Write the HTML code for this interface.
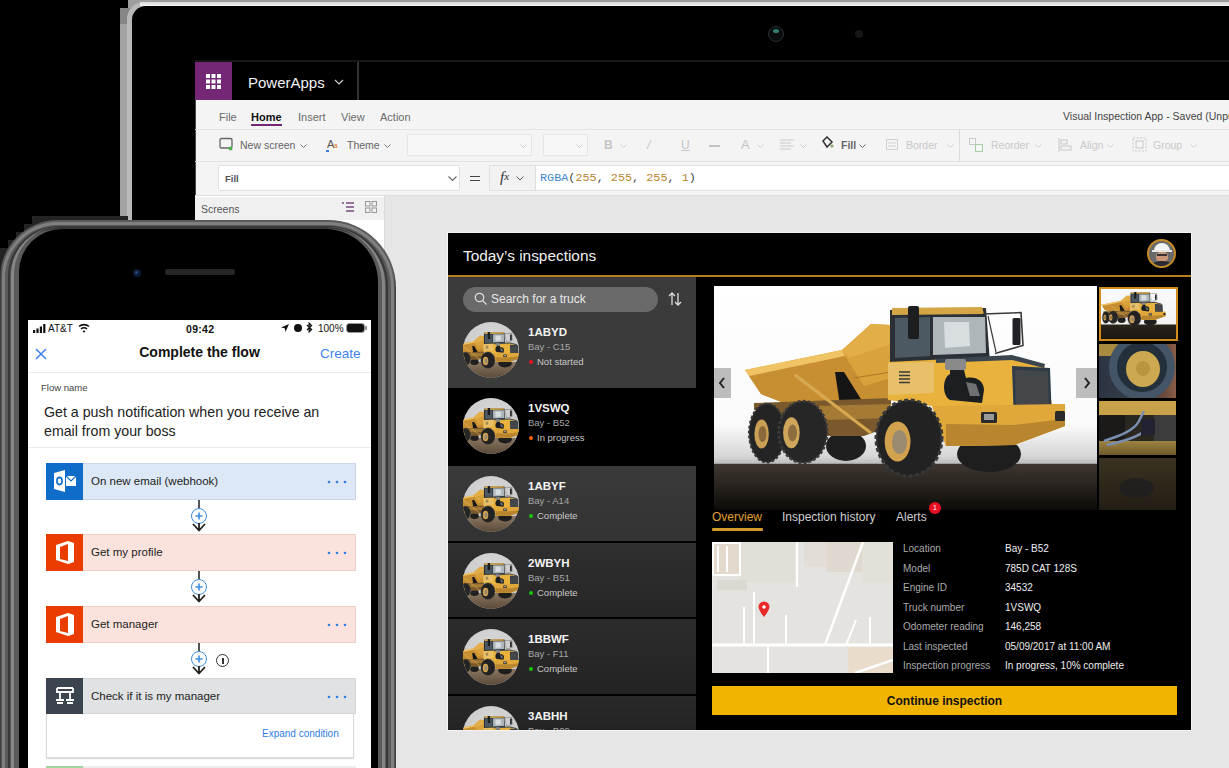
<!DOCTYPE html>
<html><head><meta charset="utf-8">
<style>
*{box-sizing:border-box;margin:0;padding:0}
html,body{width:1229px;height:768px;overflow:hidden;background:#000}
body{position:relative;font-family:"Liberation Sans",sans-serif}
.a{position:absolute}
.t{position:absolute;white-space:nowrap;line-height:1}
.tav{width:56px;height:56px;border-radius:50%;background:radial-gradient(circle at 50% 30%,#d8d8d8 0,#cfcfcf 40%,#bdbdbd 100%);overflow:hidden}
</style></head><body>
<svg width="0" height="0" style="position:absolute">
<defs>
 <linearGradient id="bodyG" x1="0" y1="0" x2="0" y2="1"><stop offset="0" stop-color="#e8b548"/><stop offset="1" stop-color="#c28a2a"/></linearGradient>
 <linearGradient id="hoodG" x1="0" y1="0" x2="1" y2="0"><stop offset="0" stop-color="#e9b745"/><stop offset="1" stop-color="#f0c050"/></linearGradient>
 <symbol id="truck" viewBox="0 0 383 224">
  <!-- far front wheel -->
  <ellipse cx="275" cy="168" rx="32" ry="18" fill="#1e1e1e"/>
  <!-- hidden middle wheel -->
  <ellipse cx="132" cy="160" rx="20" ry="15" fill="#1f1f1f"/>
  <!-- dump body -->
  <path d="M31 84 L128 64 L157 38 L177 39 L177 110 L152 122 L120 128 L70 117 L47 108 Z" fill="#d9a23a"/>
  <path d="M31 84 L128 64 L131 70 L37 92 Z" fill="#f0c464"/>
  <path d="M128 64 L157 38 L177 39 L177 58 L135 72 Z" fill="#e3ae48"/>
  <path d="M35 90 L131 70 L150 100 L177 92 L177 110 L152 122 L120 128 L70 117 L47 108 Z" fill="#c88f32"/>
  <path d="M121 86 L130 86 L150 118 L127 126 Z" fill="#151515"/>
  <path d="M81 89 L157 147" stroke="#d7a84f" stroke-width="3"/>
  <path d="M140 92 L177 86" stroke="#b07a28" stroke-width="1.2"/>
  <!-- chassis -->
  <path d="M40 117 L177 112 L177 140 L150 150 L112 150 L60 128 L40 124 Z" fill="#7a5a2c"/><path d="M100 120 L177 118 L177 132 L110 134 Z" fill="#a47a34"/><path d="M81 89 L157 147" stroke="#d7a84f" stroke-width="3"/>
  <!-- rear wheels -->
  <ellipse cx="53" cy="147" rx="18" ry="29.5" fill="#242424" stroke="#3a3a3a" stroke-width="2" stroke-dasharray="3 2"/>
  <ellipse cx="47.6" cy="148" rx="7.2" ry="14.4" fill="#caa056"/>
  <ellipse cx="48.5" cy="148" rx="4" ry="8" fill="#8a6a3a"/>
  <ellipse cx="89" cy="146" rx="24.3" ry="31" fill="#262626" stroke="#3c3c3c" stroke-width="2.5" stroke-dasharray="3 2"/>
  <ellipse cx="77.4" cy="146.7" rx="8.3" ry="15.5" fill="#cfa55a"/>
  <ellipse cx="78.5" cy="147" rx="4.5" ry="8.5" fill="#8e6e3e"/>
  <!-- cab -->
  <path d="M176 24 L272 22 L276 77 L176 80 Z" fill="#2a3036"/>
  <path d="M178 22 L268 21 L270 28 L178 29 Z" fill="#d5a646"/>
  <path d="M181 32 L216 31 L216 70 L181 72 Z" fill="#4c5862"/>
  <path d="M219 31 L271 31 L272 67 L219 69 Z" fill="#aeb6ba"/>
  <path d="M230 36 L255 36 L256 60 L231 62 Z" fill="#d8dde0"/>
  <rect x="194" y="20" width="11" height="33" rx="2" fill="#1c1e20"/>
  <path d="M269 28 L307 26.6 L309 59.4 L281 67.6" stroke="#3a3a3a" stroke-width="1.6" fill="none"/>
  <path d="M274 30 L282 66" stroke="#3a3a3a" stroke-width="1.2"/>
  <rect x="298.5" y="32" width="8" height="27" rx="1.5" fill="#1f2124"/>
  <!-- hood / front body -->
  <path d="M174 76 L298 70 L330 78 L338 118 L351 118 L351 140 L300 159 L232 160 L218 120 L174 114 Z" fill="#e8b23c"/>
  <path d="M222 73 L298 69 L331 78 L330 82 L298 74 L222 77 Z" fill="#3b4550"/>
  <path d="M174 77 L220 76 L220 107 L174 109 Z" fill="#e9c06a"/>
  <path d="M185 86 L196 86 M185 89.5 L196 89.5 M185 93 L196 93 M185 96.5 L196 96.5" stroke="#3a3a3a" stroke-width="1.5"/>
  <path d="M298 80 L336 82 L338 136 L300 137 Z" fill="#2e3a48"/>
  <path d="M301 84 L334 85 L335 133 L302 134 Z" fill="#44474a"/>
  <path d="M218 120 L351 118 L351 140 L300 159 L232 160 Z" fill="#e0a83a"/>
  <path d="M232 138 L300 139 L351 133 L351 140 L300 159 L232 160 Z" fill="#b9852e"/>
  <rect x="267" y="126" width="16" height="11" rx="1.5" fill="#2a2a2a"/>
  <rect x="270" y="128" width="10" height="6" fill="#9a9a9a"/>
  <rect x="341" y="125" width="10" height="10" rx="1.5" fill="#2a2a2a"/>
  <!-- intake -->
  <rect x="231" y="73" width="21" height="11" rx="2" fill="#8a8a8a"/>
  <path d="M236 84 L250 84 L252 92 C262 90 270 95 270 104 L268 117 L236 114 C228 110 228 92 236 88 Z" fill="#1c1f22"/>
  <path d="M252 96 L262 98 L266 110 L256 110 Z" fill="#6e7074"/>
  <!-- front wheel -->
  <ellipse cx="195" cy="152" rx="33" ry="38" fill="#222" stroke="#383838" stroke-width="3" stroke-dasharray="4 2.5"/>
  <ellipse cx="183.6" cy="155.5" rx="12.9" ry="20" fill="#d2a24e"/>
  <ellipse cx="185.5" cy="156" rx="7.5" ry="12" fill="#9a8a70"/>
 </symbol>
</defs></svg>

<!-- ===== LAPTOP ===== -->
<div class="a" style="left:128px;top:0;width:1200px;height:900px;background:#9e9e9e"></div>
<div class="a" style="left:120px;top:8px;width:20px;height:900px;background:linear-gradient(#878787 0,#878787 16px,#a2a2a2 16px)"></div>
<div class="a" style="left:127px;top:2px;width:1200px;height:900px;background:#b9b9b9;border-top-left-radius:17px"></div>
<div class="a" style="left:140px;top:2px;width:1200px;height:4px;background:linear-gradient(#d8d8d8,#f4f4f4)"></div>
<div class="a" style="left:132px;top:6px;width:1200px;height:900px;background:#000;border-top-left-radius:14px"></div>
<div class="a" style="left:768px;top:26px;width:16px;height:16px;border-radius:50%;background:#0a0d10;border:1px solid #2a2e30"></div>
<div class="a" style="left:773px;top:29px;width:6px;height:4px;border-radius:50%;background:#3e9c8a;opacity:.8"></div>
<div class="a" style="left:855px;top:30px;width:8px;height:8px;border-radius:50%;background:#161616"></div>
<div class="a" style="left:195px;top:60px;width:1040px;height:2px;background:#171717"></div>

<!-- PowerApps window -->
<div class="a" id="pa" style="left:195px;top:62px;width:1040px;height:710px;background:#000">
  <div class="a" style="left:0;top:0;width:37px;height:38px;background:#742774"></div>
  <svg class="a" style="left:11px;top:12px" width="15" height="15" viewBox="0 0 15 15" fill="#fff">
    <rect x="0" y="0" width="4" height="4"/><rect x="5.5" y="0" width="4" height="4"/><rect x="11" y="0" width="4" height="4"/>
    <rect x="0" y="5.5" width="4" height="4"/><rect x="5.5" y="5.5" width="4" height="4"/><rect x="11" y="5.5" width="4" height="4"/>
    <rect x="0" y="11" width="4" height="4"/><rect x="5.5" y="11" width="4" height="4"/><rect x="11" y="11" width="4" height="4"/>
  </svg>
  <div class="t" style="left:53px;top:13px;font-size:15px;color:#f2f2f2">PowerApps</div>
  <svg class="a" style="left:139px;top:17px" width="10" height="6" viewBox="0 0 10 6"><path d="M1 1 L5 5 L9 1" stroke="#ccc" stroke-width="1.2" fill="none"/></svg>
  <div class="a" style="left:162px;top:0;width:2px;height:38px;background:#333"></div>

  <!-- ribbon -->
  <div class="a" style="left:0;top:38px;width:1040px;height:96px;background:#f4f4f4"></div>
  <div class="a" style="left:0;top:38px;width:1px;height:700px;background:#444"></div>
  <div class="t" style="left:24px;top:50px;font-size:11px;color:#6a6a6a">File</div>
  <div class="t" style="left:56px;top:50px;font-size:11px;color:#111;font-weight:bold">Home</div>
  <div class="a" style="left:56px;top:62px;width:31px;height:2px;background:#742774"></div>
  <div class="t" style="left:103px;top:50px;font-size:11px;color:#6a6a6a">Insert</div>
  <div class="t" style="left:146px;top:50px;font-size:11px;color:#6a6a6a">View</div>
  <div class="t" style="left:185px;top:50px;font-size:11px;color:#6a6a6a">Action</div>
  <div class="t" style="left:868px;top:49px;font-size:10.5px;color:#444">Visual Inspection App - Saved (Unpublished)</div>
  <div class="a" style="left:0;top:67px;width:1040px;height:1px;background:#e2e2e2"></div>
  <div class="a" style="left:0;top:99px;width:1040px;height:1px;background:#e2e2e2"></div>
  <div class="a" style="left:0;top:133px;width:1040px;height:1px;background:#dedede"></div>

  <!-- toolbar (window-relative: x-195, y-62) -->
  <svg class="a" style="left:24px;top:75px" width="14" height="14" viewBox="0 0 14 14"><rect x="1" y="1.5" width="12" height="9.5" rx="1.5" stroke="#666" stroke-width="1.3" fill="none"/><circle cx="11.5" cy="11.5" r="2" fill="#4caf50"/></svg>
  <div class="t" style="left:45px;top:78px;font-size:10.5px;color:#666">New screen</div>
  <svg class="a" style="left:105px;top:82px" width="7" height="5" viewBox="0 0 7 5"><path d="M.5 .5 L3.5 3.5 L6.5 .5" stroke="#777" fill="none"/></svg>
  <div class="t" style="left:132px;top:77px;font-size:11px;color:#555;letter-spacing:-1px">A<span style="font-size:8px;color:#e67e22">a</span></div>
  <div class="a" style="left:131px;top:88px;width:3px;height:2px;background:#3b7ddd"></div>
  <div class="t" style="left:152px;top:78px;font-size:10.5px;color:#666">Theme</div>
  <svg class="a" style="left:189px;top:82px" width="7" height="5" viewBox="0 0 7 5"><path d="M.5 .5 L3.5 3.5 L6.5 .5" stroke="#777" fill="none"/></svg>
  <div class="a" style="left:212px;top:72px;width:125px;height:22px;background:#f7f7f7;border:1px solid #e6e6e6"></div>
  <svg class="a" style="left:325px;top:82px" width="7" height="5" viewBox="0 0 7 5"><path d="M.5 .5 L3.5 3.5 L6.5 .5" stroke="#ccc" fill="none"/></svg>
  <div class="a" style="left:348px;top:72px;width:45px;height:22px;background:#f7f7f7;border:1px solid #e6e6e6"></div>
  <svg class="a" style="left:381px;top:82px" width="7" height="5" viewBox="0 0 7 5"><path d="M.5 .5 L3.5 3.5 L6.5 .5" stroke="#ccc" fill="none"/></svg>
  <div class="t" style="left:409px;top:77px;font-size:12px;color:#c4c4c4;font-weight:bold">B</div>
  <div class="t" style="left:452px;top:77px;font-size:12px;color:#c4c4c4;font-style:italic">/</div>
  <div class="t" style="left:486px;top:77px;font-size:12px;color:#c4c4c4;text-decoration:underline">U</div>
  <div class="a" style="left:514px;top:83px;width:11px;height:1.5px;background:#c4c4c4"></div>
  <div class="t" style="left:546px;top:76px;font-size:13px;color:#c4c4c4">A</div>
  <svg class="a" style="left:585px;top:77px" width="18" height="12" viewBox="0 0 18 12" stroke="#c8c8c8"><path d="M0 1H14M0 4H11M0 7H14M0 10H11"/></svg>
  <svg class="a" style="left:425px;top:82px" width="7" height="5" viewBox="0 0 7 5"><path d="M.5 .5 L3.5 3.5 L6.5 .5" stroke="#ccc" fill="none"/></svg>
  <svg class="a" style="left:562px;top:82px" width="7" height="5" viewBox="0 0 7 5"><path d="M.5 .5 L3.5 3.5 L6.5 .5" stroke="#ccc" fill="none"/></svg>
  <svg class="a" style="left:605px;top:82px" width="7" height="5" viewBox="0 0 7 5"><path d="M.5 .5 L3.5 3.5 L6.5 .5" stroke="#ccc" fill="none"/></svg>
  <svg class="a" style="left:625px;top:74px" width="14" height="14" viewBox="0 0 14 14"><path d="M3 5 L7 1 L12 6 L7 11 Z" stroke="#333" stroke-width="1.5" fill="none"/><circle cx="12" cy="10" r="1.6" fill="#8a6"/><rect x="1" y="13" width="11" height="1" fill="#fff"/></svg>
  <div class="t" style="left:646px;top:78px;font-size:10.5px;color:#666;font-weight:bold">Fill</div>
  <svg class="a" style="left:664px;top:82px" width="7" height="5" viewBox="0 0 7 5"><path d="M.5 .5 L3.5 3.5 L6.5 .5" stroke="#666" fill="none"/></svg>
  <svg class="a" style="left:691px;top:77px" width="12" height="11" viewBox="0 0 12 11" stroke="#d0d0d0" fill="none"><rect x=".5" y=".5" width="11" height="10"/><path d="M2 4H10M2 7H10"/></svg>
  <div class="t" style="left:711px;top:78px;font-size:10.5px;color:#c8c8c8">Border</div>
  <svg class="a" style="left:752px;top:82px" width="7" height="5" viewBox="0 0 7 5"><path d="M.5 .5 L3.5 3.5 L6.5 .5" stroke="#ccc" fill="none"/></svg>
  <div class="a" style="left:764px;top:68px;width:1px;height:31px;background:#dcdcdc"></div>
  <svg class="a" style="left:774px;top:76px" width="14" height="14" viewBox="0 0 14 14" stroke="#c8c8c8" fill="none"><rect x=".5" y=".5" width="6" height="6"/><rect x="6.5" y="6.5" width="7" height="7" stroke="#a8d0a8"/></svg>
  <div class="t" style="left:796px;top:78px;font-size:10.5px;color:#c8c8c8">Reorder</div>
  <svg class="a" style="left:840px;top:82px" width="7" height="5" viewBox="0 0 7 5"><path d="M.5 .5 L3.5 3.5 L6.5 .5" stroke="#ccc" fill="none"/></svg>
  <svg class="a" style="left:863px;top:76px" width="14" height="14" viewBox="0 0 14 14" stroke="#c8c8c8" fill="none"><path d="M1 0V14"/><rect x="3" y="2" width="6" height="4"/><rect x="3" y="8" width="10" height="4"/></svg>
  <div class="t" style="left:885px;top:78px;font-size:10.5px;color:#c8c8c8">Align</div>
  <svg class="a" style="left:912px;top:82px" width="7" height="5" viewBox="0 0 7 5"><path d="M.5 .5 L3.5 3.5 L6.5 .5" stroke="#ccc" fill="none"/></svg>
  <svg class="a" style="left:937px;top:75px" width="15" height="15" viewBox="0 0 15 15" stroke="#c8c8c8" fill="none" stroke-dasharray="2 1.5"><rect x="1" y="1" width="13" height="13"/><rect x="4" y="4" width="7" height="7" stroke-dasharray="none"/></svg>
  <div class="t" style="left:958px;top:78px;font-size:10.5px;color:#c8c8c8">Group</div>
  <svg class="a" style="left:995px;top:82px" width="7" height="5" viewBox="0 0 7 5"><path d="M.5 .5 L3.5 3.5 L6.5 .5" stroke="#ccc" fill="none"/></svg>

  <!-- formula bar -->
  <div class="a" style="left:23px;top:103px;width:242px;height:26px;background:#fff;border:1px solid #e0e0e0;border-radius:2px"></div>
  <div class="t" style="left:30px;top:112px;font-size:9.5px;color:#555;font-weight:bold">Fill</div>
  <svg class="a" style="left:253px;top:114px" width="9" height="6" viewBox="0 0 9 6"><path d="M.5 .5 L4.5 4.5 L8.5 .5" stroke="#666" stroke-width="1.1" fill="none"/></svg>
  <div class="a" style="left:275px;top:114px;width:10px;height:1.4px;background:#444"></div>
  <div class="a" style="left:275px;top:118px;width:10px;height:1.4px;background:#444"></div>
  <div class="a" style="left:294px;top:103px;width:47px;height:26px;background:#f2f2f2;border:1px solid #e0e0e0"></div>
  <div class="t" style="left:305px;top:108px;font-size:15px;color:#333;font-family:'Liberation Serif',serif;font-style:italic">f<span style="font-size:11px;position:relative;top:-2px">x</span></div>
  <svg class="a" style="left:321px;top:114px" width="8" height="5" viewBox="0 0 8 5"><path d="M.5 .5 L4 4 L7.5 .5" stroke="#555" fill="none"/></svg>
  <div class="a" style="left:341px;top:103px;width:700px;height:26px;background:#fff;border-top:1px solid #e0e0e0;border-bottom:1px solid #e0e0e0"></div>
  <div class="t" style="left:345px;top:111px;font-size:11.8px;font-family:'Liberation Mono',monospace;color:#b8862f"><span style="color:#3f86c6">RGBA</span><span style="color:#444">(</span>255<span style="color:#444">, </span>255<span style="color:#444">, </span>255<span style="color:#444">, </span>1<span style="color:#444">)</span></div>

  <!-- left panel -->
  <div class="a" style="left:0;top:134px;width:190px;height:600px;background:#fff"></div>
  <div class="a" style="left:0;top:135px;width:190px;height:23px;background:#f0f0f0"></div>
  <div class="t" style="left:6px;top:142px;font-size:10.5px;color:#555">Screens</div>
  <svg class="a" style="left:147px;top:140px" width="13" height="11" viewBox="0 0 13 11" stroke="#7a4b84" stroke-width="1.3"><path d="M0 1H2M4 1H12M4 5H12M4 9H12"/></svg>
  <svg class="a" style="left:170px;top:139px" width="12" height="12" viewBox="0 0 12 12" stroke="#999" fill="none"><rect x=".5" y=".5" width="4.5" height="4.5"/><rect x="7" y=".5" width="4.5" height="4.5"/><rect x=".5" y="7" width="4.5" height="4.5"/><rect x="7" y="7" width="4.5" height="4.5"/></svg>
  <div class="a" style="left:189px;top:134px;width:1px;height:600px;background:#dadada"></div>
  <!-- canvas -->
  <div class="a" style="left:190px;top:134px;width:850px;height:600px;background:#e6e6e6"></div>

</div>


<!-- ===== APP ===== -->
<div class="a" id="app" style="left:448px;top:233px;width:743px;height:497px;background:#000;overflow:hidden;box-shadow:0 0 0 1px #f4f4f4">
  <div class="t" style="left:15px;top:15px;font-size:15.4px;color:#f0f0f0">Today&#8217;s inspections</div>
  <div class="a" style="left:699px;top:6px;width:29px;height:29px;border-radius:50%;border:2px solid #c58a26;background:#6a6a6a;overflow:hidden">
    <div class="a" style="left:5px;top:2px;width:16px;height:9px;border-radius:8px 8px 1px 1px;background:#f4f4f4"></div>
    <div class="a" style="left:3px;top:9px;width:20px;height:2px;background:#e8e8e8"></div>
    <div class="a" style="left:7px;top:11px;width:12px;height:10px;border-radius:40%;background:#c89878"></div>
    <div class="a" style="left:8px;top:13px;width:10px;height:2px;background:#333"></div>
    <div class="a" style="left:2px;top:20px;width:22px;height:10px;border-radius:50% 50% 0 0;background:#2a2a33"></div>
  </div>
  <div class="a" style="left:0;top:42px;width:743px;height:2px;background:#b97d22"></div>

  <!-- thumbnails (app-relative: x-448, y-233) -->
  <div class="a" style="left:651px;top:54px;width:79px;height:54px;border:2px solid #d08d1e;background:linear-gradient(#fafafa 0,#f2f2f2 70%,#2a231c 72%,#1a1610 100%);overflow:hidden">
    <svg class="a" style="left:-1px;top:0px" width="79" height="50" viewBox="25 15 335 190"><use href="#truck"/></svg>
  </div>
  <div class="a" style="left:651px;top:111px;width:77px;height:54px;background:#3a3630;overflow:hidden">
    <div class="a" style="left:0;top:0;width:77px;height:54px;background:linear-gradient(90deg,#2b3440 0,#36404c 50%,#6a4a3c 85%,#8a5e48 100%)"></div>
    <div class="a" style="left:0;top:0;width:30px;height:12px;background:#a88a40"></div>
    <div class="a" style="left:10px;top:-10px;width:66px;height:66px;border-radius:50%;background:#23303c;border:8px solid #435567"></div>
    <div class="a" style="left:27px;top:7px;width:34px;height:36px;border-radius:50%;background:#cca850"></div>
    <div class="a" style="left:37px;top:17px;width:14px;height:15px;border-radius:50%;background:#b8953e"></div>
  </div>
  <div class="a" style="left:651px;top:168px;width:77px;height:54px;background:#2a2620;overflow:hidden">
    <div class="a" style="left:0;top:0;width:77px;height:14px;background:#c8a248"></div>
    <div class="a" style="left:0;top:14px;width:26px;height:26px;background:#1b1a18"></div>
    <div class="a" style="left:55px;top:14px;width:22px;height:26px;background:#3c3c3c"></div>
    <div class="a" style="left:0;top:40px;width:77px;height:14px;background:linear-gradient(#9d8340,#6e5a2c)"></div>
    <svg class="a" style="left:0;top:0" width="77" height="54" viewBox="0 0 77 54" fill="none" stroke="#7a8fb0" stroke-width="2.5"><path d="M5 40 C20 35 35 30 40 20 L45 10"/><path d="M8 44 C25 40 40 36 48 28"/></svg>
    <div class="a" style="left:42px;top:18px;width:14px;height:16px;background:#223" ></div>
  </div>
  <div class="a" style="left:651px;top:225px;width:77px;height:52px;background:linear-gradient(#3a3322,#221d14);overflow:hidden">
    <div class="a" style="left:20px;top:20px;width:35px;height:20px;border-radius:50%;background:#1b1b22;opacity:.6"></div>
  </div>

  <!-- tabs -->
  <div class="t" style="left:264px;top:278px;font-size:12px;color:#e0a030">Overview</div>
  <div class="a" style="left:264px;top:295px;width:51px;height:3px;background:#d39a2a;border-radius:1px"></div>
  <div class="t" style="left:334px;top:278px;font-size:12px;color:#cfcfcf">Inspection history</div>
  <div class="t" style="left:448px;top:278px;font-size:12px;color:#cfcfcf">Alerts</div>
  <div class="a" style="left:481px;top:269px;width:12px;height:12px;border-radius:50%;z-index:5;background:#e81123;color:#fff;font-size:7px;line-height:12px;text-align:center">1</div>

  <!-- map -->
  <div class="a" style="left:264px;top:309px;width:181px;height:131px;background:#e5e3df;overflow:hidden">
    <svg class="a" style="left:0;top:0" width="181" height="131" viewBox="0 0 181 131">
      <rect x="28" y="0" width="55" height="40" fill="#e2ded8"/>
      <rect x="92" y="0" width="55" height="25" fill="#e2ddd6"/>
      <rect x="115" y="0" width="35" height="30" fill="#dfd8ce"/>
      <rect x="150" y="0" width="31" height="40" fill="#e3dfd9"/>
      <rect x="5" y="38" width="30" height="10" fill="#dcd8d2"/>
      <rect x="136" y="105" width="45" height="26" fill="#e9dccb"/>
      
      <path d="M1 1H28V33H1Z M6 4V30 M15 4V30" stroke="#fff" stroke-width="2" fill="#e3dacd"/>
      <path d="M85 0V45" stroke="#fff" stroke-width="2.2"/>
      <path d="M151 0L113 103" stroke="#fff" stroke-width="2.5"/>
      <path d="M0 103H181" stroke="#fff" stroke-width="3"/>
      <path d="M42 50V103M32 65V103M74 73V103M158 75V103M144 78L134 103" stroke="#fff" stroke-width="2"/>
      <path d="M56 103V131" stroke="#fff" stroke-width="2.2"/>
      <path d="M143 131L181 118" stroke="#fff" stroke-width="2.5"/>
      <path d="M0 0V131" stroke="#fafafa" stroke-width="1"/>
      <path d="M52 75C52 75 46.5 68 46.5 65 A5.5 5.5 0 0 1 57.5 65 C57.5 68 52 75 52 75Z" fill="#ea2a2a"/>
      <circle cx="52" cy="65" r="1.8" fill="#fff"/>
    </svg>
  </div>

  <!-- details -->
  <div class="a" style="left:455px;top:306px;font-size:10px;color:#aaa;line-height:19.5px;white-space:nowrap">Location<br>Model<br>Engine ID<br>Truck number<br>Odometer reading<br>Last inspected<br>Inspection progress</div>
  <div class="a" style="left:557px;top:306px;font-size:10px;color:#eee;line-height:19.5px;white-space:nowrap">Bay - B52<br>785D CAT 128S<br>34532<br>1VSWQ<br>146,258<br>05/09/2017 at 11:00 AM<br>In progress, 10% complete</div>

  <!-- button -->
  <div class="a" style="left:264px;top:453px;width:465px;height:29px;background:#f1b400"></div>
  <div class="t" style="left:264px;top:462px;width:465px;text-align:center;font-size:12px;color:#111;font-weight:bold">Continue inspection</div>
  <!-- main image -->
  <div class="a" style="left:266px;top:53px;width:383px;height:224px;background:linear-gradient(#fff 0,#fafafa 62%,#d6d6d6 76%,#bcbcbc 79.2%,#3d3630 79.4%,#2b2621 88%,#0c0a08 100%);overflow:hidden">
    <svg class="a" style="left:0;top:0" width="383" height="224"><use href="#truck"/></svg>
    <div class="a" style="left:0;top:82px;width:17px;height:30px;background:#bdbdbd"></div>
    <svg class="a" style="left:4px;top:91px" width="8" height="12" viewBox="0 0 8 12"><path d="M6 1 L2 6 L6 11" stroke="#222" stroke-width="2" fill="none"/></svg>
    <div class="a" style="left:362px;top:82px;width:21px;height:30px;background:#bdbdbd"></div>
    <svg class="a" style="left:369px;top:91px" width="8" height="12" viewBox="0 0 8 12"><path d="M2 1 L6 6 L2 11" stroke="#222" stroke-width="2" fill="none"/></svg>
  </div>

  <div class="a" style="left:0;top:44px;width:248px;height:35px;background:#3b3b3b"></div>
  <div class="a" style="left:0;top:79px;width:248px;height:76px;background:linear-gradient(#3b3b3b,#3b3b3b);overflow:hidden">
    <div class="a tav" style="left:15px;top:10px"><div class="a" style="left:0;top:40px;width:56px;height:16px;background:linear-gradient(#8a7660,#5a4a3a)"></div><svg class="a" style="left:-12px;top:6px" width="82" height="52" viewBox="20 10 343 200"><use href="#truck"/></svg></div>
    <div class="t" style="left:80px;top:15px;font-size:11.5px;font-weight:bold;color:#f4f4f4">1ABYD</div>
    <div class="t" style="left:80px;top:30px;font-size:9.5px;color:#a8a8a8">Bay - C15</div>
    <div class="a" style="left:81px;top:48px;width:4px;height:4px;border-radius:50%;background:#e81123"></div>
    <div class="t" style="left:89px;top:45px;font-size:9.5px;color:#c8c8c8">Not started</div>
  </div>
  <div class="a" style="left:0;top:155px;width:248px;height:78px;background:linear-gradient(#000,#000);overflow:hidden">
    <div class="a tav" style="left:15px;top:10px"><div class="a" style="left:0;top:40px;width:56px;height:16px;background:linear-gradient(#8a7660,#5a4a3a)"></div><svg class="a" style="left:-12px;top:6px" width="82" height="52" viewBox="20 10 343 200"><use href="#truck"/></svg></div>
    <div class="t" style="left:80px;top:15px;font-size:11.5px;font-weight:bold;color:#f4f4f4">1VSWQ</div>
    <div class="t" style="left:80px;top:30px;font-size:9.5px;color:#a8a8a8">Bay - B52</div>
    <div class="a" style="left:81px;top:48px;width:4px;height:4px;border-radius:50%;background:#f7630c"></div>
    <div class="t" style="left:89px;top:45px;font-size:9.5px;color:#c8c8c8">In progress</div>
  </div>
  <div class="a" style="left:0;top:233px;width:248px;height:75px;background:linear-gradient(#3a3a3a,#333);overflow:hidden">
    <div class="a tav" style="left:15px;top:10px"><div class="a" style="left:0;top:40px;width:56px;height:16px;background:linear-gradient(#8a7660,#5a4a3a)"></div><svg class="a" style="left:-12px;top:6px" width="82" height="52" viewBox="20 10 343 200"><use href="#truck"/></svg></div>
    <div class="t" style="left:80px;top:15px;font-size:11.5px;font-weight:bold;color:#f4f4f4">1ABYF</div>
    <div class="t" style="left:80px;top:30px;font-size:9.5px;color:#a8a8a8">Bay - A14</div>
    <div class="a" style="left:81px;top:48px;width:4px;height:4px;border-radius:50%;background:#16c60c"></div>
    <div class="t" style="left:89px;top:45px;font-size:9.5px;color:#c8c8c8">Complete</div>
  </div>
  <div class="a" style="left:0;top:310px;width:248px;height:74px;background:linear-gradient(#2f2f2f,#262626);overflow:hidden">
    <div class="a tav" style="left:15px;top:10px"><div class="a" style="left:0;top:40px;width:56px;height:16px;background:linear-gradient(#8a7660,#5a4a3a)"></div><svg class="a" style="left:-12px;top:6px" width="82" height="52" viewBox="20 10 343 200"><use href="#truck"/></svg></div>
    <div class="t" style="left:80px;top:15px;font-size:11.5px;font-weight:bold;color:#f4f4f4">2WBYH</div>
    <div class="t" style="left:80px;top:30px;font-size:9.5px;color:#a8a8a8">Bay - B51</div>
    <div class="a" style="left:81px;top:48px;width:4px;height:4px;border-radius:50%;background:#16c60c"></div>
    <div class="t" style="left:89px;top:45px;font-size:9.5px;color:#c8c8c8">Complete</div>
  </div>
  <div class="a" style="left:0;top:386px;width:248px;height:75px;background:linear-gradient(#2c2c2c,#232323);overflow:hidden">
    <div class="a tav" style="left:15px;top:10px"><div class="a" style="left:0;top:40px;width:56px;height:16px;background:linear-gradient(#8a7660,#5a4a3a)"></div><svg class="a" style="left:-12px;top:6px" width="82" height="52" viewBox="20 10 343 200"><use href="#truck"/></svg></div>
    <div class="t" style="left:80px;top:15px;font-size:11.5px;font-weight:bold;color:#f4f4f4">1BBWF</div>
    <div class="t" style="left:80px;top:30px;font-size:9.5px;color:#a8a8a8">Bay - F11</div>
    <div class="a" style="left:81px;top:48px;width:4px;height:4px;border-radius:50%;background:#16c60c"></div>
    <div class="t" style="left:89px;top:45px;font-size:9.5px;color:#c8c8c8">Complete</div>
  </div>
  <div class="a" style="left:0;top:463px;width:248px;height:40px;background:linear-gradient(#2a2a2a,#222);overflow:hidden">
    <div class="a tav" style="left:15px;top:10px"><div class="a" style="left:0;top:40px;width:56px;height:16px;background:linear-gradient(#8a7660,#5a4a3a)"></div><svg class="a" style="left:-12px;top:6px" width="82" height="52" viewBox="20 10 343 200"><use href="#truck"/></svg></div>
    <div class="t" style="left:80px;top:15px;font-size:11.5px;font-weight:bold;color:#f4f4f4">3ABHH</div>
    <div class="t" style="left:80px;top:30px;font-size:9.5px;color:#a8a8a8">Bay - B09</div>
    <div class="a" style="left:81px;top:48px;width:4px;height:4px;border-radius:50%;background:#16c60c"></div>
    <div class="t" style="left:89px;top:45px;font-size:9.5px;color:#c8c8c8">Complete</div>
  </div>

  <div class="a" style="left:15px;top:54px;width:195px;height:25px;border-radius:13px;background:#6a6a6a"></div>
  <svg class="a" style="left:26px;top:59px" width="14" height="14" viewBox="0 0 14 14" stroke="#ddd" stroke-width="1.3" fill="none"><circle cx="5.5" cy="5.5" r="4.2"/><path d="M8.6 8.6 L12.5 12.5"/></svg>
  <div class="t" style="left:43px;top:60px;font-size:12px;color:#e8e8e8">Search for a truck</div>
  <svg class="a" style="left:220px;top:59px" width="14" height="14" viewBox="0 0 14 14" stroke="#ddd" stroke-width="1.3" fill="none"><path d="M4 13V1M1 4L4 1L7 4M10 1V13M7 10L10 13L13 10"/></svg>
</div>

<!-- ===== PHONE ===== -->
<svg class="a" style="left:0;top:214px" width="128" height="60" viewBox="0 0 128 60"><path d="M32 2 H128 V60 H0 V34 H8 V26 H16 V18 H24 V10 H32 Z" fill="#232323"/></svg>
<div class="a" style="left:0;top:220px;width:396px;height:720px;border-radius:58px 68px 0 0;background:linear-gradient(90deg,#3a3a3a 0,#5a5a5a 2px,#5a5a5a 394px,#3a3a3a 396px)"></div>
<div class="a" style="left:2px;top:221.5px;width:392px;height:720px;border-radius:56px 66px 0 0;border:3px solid #808080;border-top-width:3.5px"></div>
<div class="a" style="left:8px;top:226px;width:380px;height:720px;border-radius:50px 60px 0 0;border:2.5px solid #383838;border-top-width:3px"></div>
<div class="a" style="left:11px;top:227px;width:374px;height:720px;border-radius:48px 58px 0 0;border:3.5px solid #868686;border-top-width:0"></div>
<div class="a" style="left:19px;top:229px;width:359px;height:720px;border-radius:43px 53px 0 0;background:#000"></div>
<div class="a" style="left:165px;top:269px;width:70px;height:6px;border-radius:3px;background:#262626"></div>
<div class="a" style="left:133px;top:269px;width:8px;height:8px;border-radius:50%;background:#0d1a33"></div>
<div class="a" style="left:135px;top:271px;width:3px;height:3px;border-radius:50%;background:#2a4a8a"></div>
<!-- screen -->
<div class="a" id="scr" style="left:28px;top:320px;width:343px;height:460px;background:#fff;overflow:hidden"></div>
<div id="phc">
  <svg class="a" style="left:33px;top:324px" width="13" height="9" viewBox="0 0 13 9" fill="#111"><rect x="0" y="6" width="2.2" height="3"/><rect x="3.4" y="4.5" width="2.2" height="4.5"/><rect x="6.8" y="2.5" width="2.2" height="6.5"/><rect x="10.2" y="0" width="2.2" height="9"/></svg>
  <div class="t" style="left:48px;top:324px;font-size:10px;color:#111">AT&amp;T</div>
  <svg class="a" style="left:78px;top:323px" width="12" height="10" viewBox="0 0 12 10" fill="none" stroke="#111" stroke-width="1.6"><path d="M1 3.5 A7.5 7.5 0 0 1 11 3.5M3 6 A4.3 4.3 0 0 1 9 6"/><circle cx="6" cy="8.5" r="1.1" fill="#111" stroke="none"/></svg>
  <div class="t" style="left:186px;top:324px;font-size:10.5px;color:#111;font-weight:bold;letter-spacing:.3px">09:42</div>
  <svg class="a" style="left:281px;top:324px" width="8" height="8" viewBox="0 0 8 8" fill="#111"><path d="M8 0 L0 3.5 L3.8 4.2 L4.5 8 Z"/></svg>
  <div class="a" style="left:294px;top:324px;width:8px;height:8px;border-radius:50%;background:#111"></div>
  <svg class="a" style="left:306px;top:322px" width="7" height="11" viewBox="0 0 7 11" fill="none" stroke="#111" stroke-width="1.3"><path d="M1 3 L5.5 7.5 L3.2 9.8 V1.2 L5.5 3.5 L1 8"/></svg>
  <div class="t" style="left:318px;top:324px;font-size:10px;color:#111">100%</div>
  <div class="a" style="left:346px;top:323px;width:19px;height:10px;border-radius:3px;border:1px solid #999;background:#fff"></div>
  <div class="a" style="left:347px;top:324px;width:17px;height:8px;border-radius:2px;background:#111"></div>
  <div class="a" style="left:365px;top:326px;width:1.5px;height:4px;background:#999"></div>
  <svg class="a" style="left:35px;top:348px" width="12" height="12" viewBox="0 0 12 12" stroke="#3d82f0" stroke-width="1.5"><path d="M1 1L11 11M11 1L1 11"/></svg>
  <div class="t" style="left:28px;top:345px;width:343px;text-align:center;font-size:14px;font-weight:bold;color:#111">Complete the flow</div>
  <div class="t" style="left:320px;top:347px;font-size:13.5px;color:#3d82f0">Create</div>
  <div class="a" style="left:28px;top:372px;width:343px;height:1px;background:#ebebeb"></div>
  <div class="t" style="left:41px;top:383px;font-size:9.5px;color:#444">Flow name</div>
  <div class="t" style="left:44px;top:405px;font-size:14.2px;color:#222">Get a push notification when you receive an</div>
  <div class="t" style="left:44px;top:424px;font-size:14.2px;color:#222">email from your boss</div>
  <div class="a" style="left:28px;top:447px;width:343px;height:1px;background:#ebebeb"></div>
  <div class="a" style="left:46px;top:463px;width:310px;height:37px;background:#dce8f5;border:1px solid #c8d8ea;border-left:none"></div>
  <div class="a" style="left:46px;top:463px;width:37px;height:37px;background:#0f6cc9"><svg class="a" style="left:7px;top:7px" width="24" height="22" viewBox="0 0 24 22"><path d="M1 3 L12 0 L12 22 L1 19 Z" fill="#fff"/><ellipse cx="6.5" cy="11" rx="2.6" ry="3.6" fill="none" stroke="#0f6cc9" stroke-width="1.6"/><rect x="13" y="6" width="10" height="10" fill="#fff"/><path d="M13 6 L18 11 L23 6" stroke="#0f6cc9" stroke-width="1.2" fill="none"/></svg></div>
  <div class="t" style="left:91px;top:476px;font-size:11.5px;color:#222">On new email (webhook)</div>
  <svg class="a" style="left:327px;top:480px" width="20" height="4" viewBox="0 0 20 4" fill="#2f7de1"><circle cx="2" cy="2" r="1.3"/><circle cx="10" cy="2" r="1.3"/><circle cx="18" cy="2" r="1.3"/></svg>
  <div class="a" style="left:198px;top:500px;width:2px;height:9px;background:#555"></div>
  <div class="a" style="left:191px;top:508px;width:16px;height:16px;border-radius:50%;border:1.5px solid #3b8de0;background:#fff"></div>
  <svg class="a" style="left:191px;top:508px" width="16" height="16" viewBox="0 0 16 16" stroke="#3b8de0" stroke-width="1.6"><path d="M8 4.5V11.5M4.5 8H11.5"/></svg>
  <svg class="a" style="left:192px;top:523px" width="14" height="9" viewBox="0 0 14 9" stroke="#222" stroke-width="1.8" fill="none"><path d="M1 1L7 7.5L13 1M7 0V7"/></svg>
  <div class="a" style="left:46px;top:534px;width:310px;height:37px;background:#fbe2dc;border:1px solid #f0cfc5;border-left:none"></div>
  <div class="a" style="left:46px;top:534px;width:37px;height:37px;background:#eb3c00"><svg class="a" style="left:9px;top:7px" width="20" height="23" viewBox="0 0 20 23"><path d="M1 4 L13 0 L19 2 L19 21 L13 23 L1 19 Z M5 6 L5 18 L13 20 L13 3 Z" fill="#fff" fill-rule="evenodd"/></svg></div>
  <div class="t" style="left:91px;top:547px;font-size:11.5px;color:#222">Get my profile</div>
  <svg class="a" style="left:327px;top:551px" width="20" height="4" viewBox="0 0 20 4" fill="#2f7de1"><circle cx="2" cy="2" r="1.3"/><circle cx="10" cy="2" r="1.3"/><circle cx="18" cy="2" r="1.3"/></svg>
  <div class="a" style="left:198px;top:571px;width:2px;height:9px;background:#555"></div>
  <div class="a" style="left:191px;top:579px;width:16px;height:16px;border-radius:50%;border:1.5px solid #3b8de0;background:#fff"></div>
  <svg class="a" style="left:191px;top:579px" width="16" height="16" viewBox="0 0 16 16" stroke="#3b8de0" stroke-width="1.6"><path d="M8 4.5V11.5M4.5 8H11.5"/></svg>
  <svg class="a" style="left:192px;top:594px" width="14" height="9" viewBox="0 0 14 9" stroke="#222" stroke-width="1.8" fill="none"><path d="M1 1L7 7.5L13 1M7 0V7"/></svg>
  <div class="a" style="left:46px;top:606px;width:310px;height:37px;background:#fbe2dc;border:1px solid #f0cfc5;border-left:none"></div>
  <div class="a" style="left:46px;top:606px;width:37px;height:37px;background:#eb3c00"><svg class="a" style="left:9px;top:7px" width="20" height="23" viewBox="0 0 20 23"><path d="M1 4 L13 0 L19 2 L19 21 L13 23 L1 19 Z M5 6 L5 18 L13 20 L13 3 Z" fill="#fff" fill-rule="evenodd"/></svg></div>
  <div class="t" style="left:91px;top:619px;font-size:11.5px;color:#222">Get manager</div>
  <svg class="a" style="left:327px;top:623px" width="20" height="4" viewBox="0 0 20 4" fill="#2f7de1"><circle cx="2" cy="2" r="1.3"/><circle cx="10" cy="2" r="1.3"/><circle cx="18" cy="2" r="1.3"/></svg>
  <div class="a" style="left:198px;top:643px;width:2px;height:9px;background:#555"></div>
  <div class="a" style="left:191px;top:651px;width:16px;height:16px;border-radius:50%;border:1.5px solid #3b8de0;background:#fff"></div>
  <svg class="a" style="left:191px;top:651px" width="16" height="16" viewBox="0 0 16 16" stroke="#3b8de0" stroke-width="1.6"><path d="M8 4.5V11.5M4.5 8H11.5"/></svg>
  <svg class="a" style="left:192px;top:666px" width="14" height="9" viewBox="0 0 14 9" stroke="#222" stroke-width="1.8" fill="none"><path d="M1 1L7 7.5L13 1M7 0V7"/></svg>
  <div class="a" style="left:216px;top:654px;width:13px;height:13px;border-radius:50%;border:1.3px solid #333"></div>
  <div class="a" style="left:221.5px;top:658px;width:2px;height:5.5px;background:#333"></div>
  <div class="a" style="left:46px;top:678px;width:308px;height:80px;background:#fff;border:1px solid #d8d8d8;box-shadow:0 1px 1px #ddd"></div>
  <div class="a" style="left:46px;top:678px;width:310px;height:36px;background:#e0e2e4;border:1px solid #d4d6d8;border-left:none"></div>
  <div class="a" style="left:46px;top:678px;width:37px;height:36px;background:#3b4550"><svg class="a" style="left:8px;top:8px" width="22" height="20" viewBox="0 0 22 20" stroke="#fff" stroke-width="1.8" fill="none"><path d="M3 2H19M3 2V6H19V2M6 6V13M16 6V13M2 14H10M12 14H20M3 17H9M13 17H19"/></svg></div>
  <div class="t" style="left:91px;top:691px;font-size:11.5px;color:#222">Check if it is my manager</div>
  <svg class="a" style="left:327px;top:695px" width="20" height="4" viewBox="0 0 20 4" fill="#2f7de1"><circle cx="2" cy="2" r="1.3"/><circle cx="10" cy="2" r="1.3"/><circle cx="18" cy="2" r="1.3"/></svg>
  <div class="t" style="left:262px;top:729px;font-size:10px;color:#2f7de1">Expand condition</div>
  <div class="a" style="left:46px;top:766px;width:310px;height:10px;background:#ececec"></div>
  <div class="a" style="left:46px;top:766px;width:37px;height:10px;background:#9fd49f"></div>
</div>


</body></html>
